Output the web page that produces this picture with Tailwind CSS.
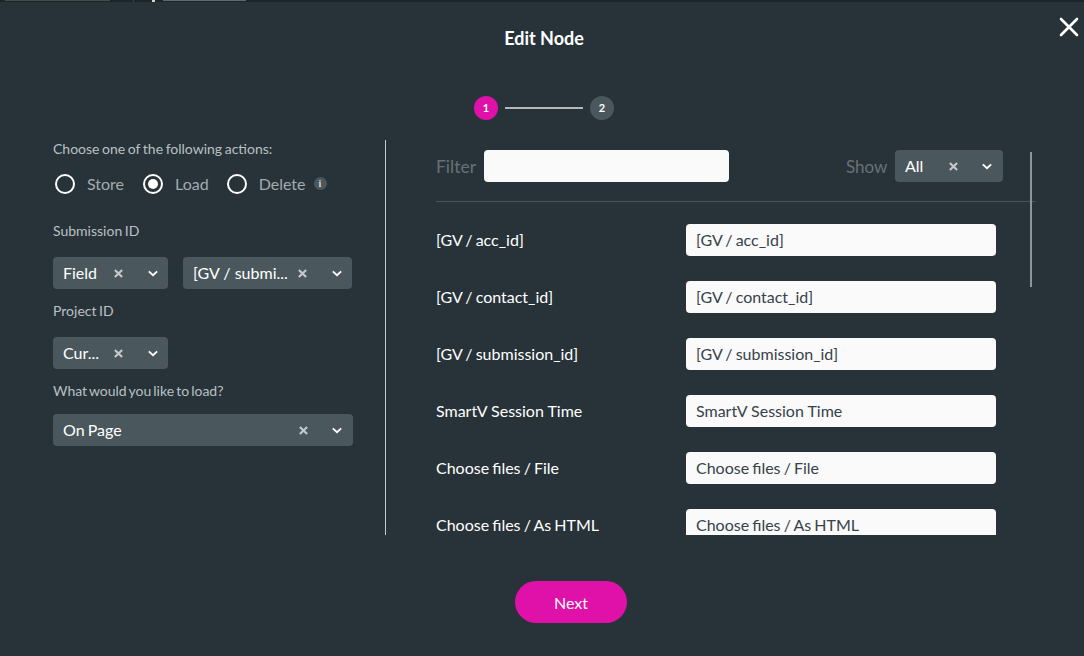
<!DOCTYPE html>
<html lang="en">
<head>
    <meta charset="UTF-8">
    <meta name="viewport" content="width=device-width, initial-scale=1.0">
    <title>Edit Node</title>
    <script src="https://cdn.jsdelivr.net/npm/@tailwindcss/browser@4"></script>
</head>
<body class="bg-[#283339] font-['Lato','Noto_Sans',sans-serif] [word-spacing:-1px]">
    <div class="relative w-[1084px] h-[656px] overflow-hidden bg-[#283339]">
        <!-- page behind the modal, just the cut-off bottom edge -->
        <div class="flex h-[2px] bg-[#1d2529]">
            <div class="ml-[5px] w-[105px] h-px bg-[#414e4c]"></div>
            <div class="ml-[23px] w-px h-[2px] bg-[#3a454b]"></div>
            <div class="ml-[18px] w-[3px] h-[2px] bg-[#d8d4c4]"></div>
            <div class="ml-[8px] w-[83px] h-px bg-[#5f6a6e]"></div>
        </div>

        <h1 class="mt-[24px] pl-[4px] h-[24px] leading-[24px] text-center text-[18px] font-bold text-white [word-spacing:0]">Edit Node</h1>
        <button class="absolute left-[1059px] top-[17px] w-[20px] h-[20px]">
            <svg viewBox="0 0 20 20" class="w-[20px] h-[20px]" fill="none" stroke="#fff" stroke-width="2.6" stroke-linecap="round"><path d="M2 2 18 18M18 2 2 18"/></svg>
        </button>

        <!-- stepper -->
        <div class="mt-[46px] ml-[474px] flex items-center h-[24px]">
            <div class="w-[24px] h-[24px] rounded-full bg-[#e011a8] flex items-center justify-center text-[11px] font-bold text-white">1</div>
            <div class="ml-[7px] w-[78px] h-[2px] bg-[#b4b8ba]"></div>
            <div class="ml-[7px] w-[24px] h-[24px] rounded-full bg-[#4a585d] flex items-center justify-center text-[11px] font-bold text-white">2</div>
        </div>

        <div class="mt-[20px] flex h-[395px]">
            <!-- left column -->
            <div class="w-[332px] ml-[53px] text-[14px] text-[#b9c0c4]">
                <p class="h-[18px] leading-[18px]">Choose one of the following actions:</p>
                <div class="mt-[15px] flex items-center h-[22px] text-[16px] text-[#a3abb0]">
                    <span class="ml-[2px] w-[20px] h-[20px] rounded-full border-2 border-white"></span>
                    <span class="ml-[12px]">Store</span>
                    <span class="ml-[19px] w-[20px] h-[20px] rounded-full border-2 border-white flex items-center justify-center"><span class="w-[10px] h-[10px] rounded-full bg-white"></span></span>
                    <span class="ml-[12px]">Load</span>
                    <span class="ml-[18px] w-[20px] h-[20px] rounded-full border-2 border-white"></span>
                    <span class="ml-[12px]">Delete</span>
                    <span class="ml-[8px] w-[13px] h-[13px] rounded-full bg-[#4a585d] flex items-center justify-center font-['Liberation_Serif',serif] text-[10px] font-bold text-[#d5d9db] -translate-y-[1px]">i</span>
                </div>

                <p class="mt-[27px] h-[18px] leading-[18px]">Submission ID</p>
                <div class="mt-[17px] flex gap-[15px]">
                    <div class="flex items-center w-[115px] h-[32px] rounded-[4px] bg-[#4a585d] pl-[10px] text-[16px] text-white">
                        <span class="w-[51px]">Field</span>
                        <svg viewBox="0 0 10 10" class="w-[9px] h-[9px]" fill="none" stroke="#c4c8ca" stroke-width="2.400"><path d="M1 1 9 9M9 1 1 9"/></svg>
                        <svg viewBox="0 0 12 8" class="ml-[25px] w-[10px] h-[7px]" fill="none" stroke="#fff" stroke-width="2.200"><path d="M1 1.500 6 6l5-4.500"/></svg>
                    </div>
                    <div class="flex items-center w-[169px] h-[32px] rounded-[4px] bg-[#4a585d] pl-[10px] text-[16px] text-white">
                        <span class="w-[105px] whitespace-nowrap [word-spacing:0]">[GV / submi...</span>
                        <svg viewBox="0 0 10 10" class="w-[9px] h-[9px]" fill="none" stroke="#c4c8ca" stroke-width="2.400"><path d="M1 1 9 9M9 1 1 9"/></svg>
                        <svg viewBox="0 0 12 8" class="ml-[25px] w-[10px] h-[7px]" fill="none" stroke="#fff" stroke-width="2.200"><path d="M1 1.500 6 6l5-4.500"/></svg>
                    </div>
                </div>

                <p class="mt-[13px] h-[18px] leading-[18px]">Project ID</p>
                <div class="mt-[17px] flex items-center w-[115px] h-[32px] rounded-[4px] bg-[#4a585d] pl-[10px] text-[16px] text-white">
                    <span class="w-[51px]">Cur...</span>
                    <svg viewBox="0 0 10 10" class="w-[9px] h-[9px]" fill="none" stroke="#c4c8ca" stroke-width="2.400"><path d="M1 1 9 9M9 1 1 9"/></svg>
                    <svg viewBox="0 0 12 8" class="ml-[25px] w-[10px] h-[7px]" fill="none" stroke="#fff" stroke-width="2.200"><path d="M1 1.500 6 6l5-4.500"/></svg>
                </div>

                <p class="mt-[13px] h-[18px] leading-[18px] [word-spacing:-1.500px]">What would you like to load?</p>
                <div class="mt-[14px] flex items-center w-[300px] h-[32px] rounded-[4px] bg-[#4a585d] pl-[10px] text-[16px] text-white">
                    <span class="w-[236px]">On Page</span>
                    <svg viewBox="0 0 10 10" class="w-[9px] h-[9px]" fill="none" stroke="#c4c8ca" stroke-width="2.400"><path d="M1 1 9 9M9 1 1 9"/></svg>
                    <svg viewBox="0 0 12 8" class="ml-[24px] w-[10px] h-[7px]" fill="none" stroke="#fff" stroke-width="2.200"><path d="M1 1.500 6 6l5-4.500"/></svg>
                </div>
            </div>

            <div class="w-px bg-[#c5c9cb]"></div>

            <!-- right column -->
            <div class="relative ml-[50px] w-[599px] overflow-hidden">
                <div class="pt-[10px] h-[62px] border-b border-[#4a565d] flex items-start">
                    <span class="w-[48px] h-[34px] leading-[34px] text-[17.5px] text-[#677178]">Filter</span>
                    <input class="w-[245px] h-[32px] rounded-[4px] bg-[#fafafa]">
                    <span class="ml-[117px] w-[49px] h-[34px] leading-[34px] text-[17px] text-[#677178]">Show</span>
                    <div class="flex items-center w-[108px] h-[32px] rounded-[4px] bg-[#4a585d] pl-[10px] text-[16px] text-white">
                        <span class="w-[44px]">All</span>
                        <svg viewBox="0 0 10 10" class="w-[9px] h-[9px]" fill="none" stroke="#c4c8ca" stroke-width="2.400"><path d="M1 1 9 9M9 1 1 9"/></svg>
                        <svg viewBox="0 0 12 8" class="ml-[24px] w-[10px] h-[7px]" fill="none" stroke="#fff" stroke-width="2.200"><path d="M1 1.500 6 6l5-4.500"/></svg>
                    </div>
                </div>
                <div class="mt-[22px] flex flex-col gap-[25px] text-[16px]">
                    <div class="flex items-center h-[32px]"><span class="w-[250px] text-white">[GV / acc_id]</span><div class="w-[310px] h-[32px] leading-[32px] px-[10px] rounded-[4px] bg-[#fafafa] text-[#37424a]">[GV / acc_id]</div></div>
                    <div class="flex items-center h-[32px]"><span class="w-[250px] text-white">[GV / contact_id]</span><div class="w-[310px] h-[32px] leading-[32px] px-[10px] rounded-[4px] bg-[#fafafa] text-[#37424a]">[GV / contact_id]</div></div>
                    <div class="flex items-center h-[32px]"><span class="w-[250px] text-white">[GV / submission_id]</span><div class="w-[310px] h-[32px] leading-[32px] px-[10px] rounded-[4px] bg-[#fafafa] text-[#37424a]">[GV / submission_id]</div></div>
                    <div class="flex items-center h-[32px] [word-spacing:0]"><span class="w-[250px] text-white">SmartV Session Time</span><div class="w-[310px] h-[32px] leading-[32px] px-[10px] rounded-[4px] bg-[#fafafa] text-[#37424a]">SmartV Session Time</div></div>
                    <div class="flex items-center h-[32px]"><span class="w-[250px] text-white">Choose files / File</span><div class="w-[310px] h-[32px] leading-[32px] px-[10px] rounded-[4px] bg-[#fafafa] text-[#37424a]">Choose files / File</div></div>
                    <div class="flex items-center h-[32px]"><span class="w-[250px] text-white">Choose files / As HTML</span><div class="w-[310px] h-[32px] leading-[32px] px-[10px] rounded-[4px] bg-[#fafafa] text-[#37424a]">Choose files / As HTML</div></div>
                </div>
                <!-- scrollbar thumb -->
                <div class="absolute left-[594px] top-[12px] w-[2px] h-[135px] bg-[#8b979d]"></div>
            </div>
        </div>

        <div class="mt-[46px] ml-[515px]">
            <button class="w-[112px] h-[42px] pt-[2px] rounded-full bg-[#e011a8] text-[16px] text-white">Next</button>
        </div>
    </div>
</body>
</html>
